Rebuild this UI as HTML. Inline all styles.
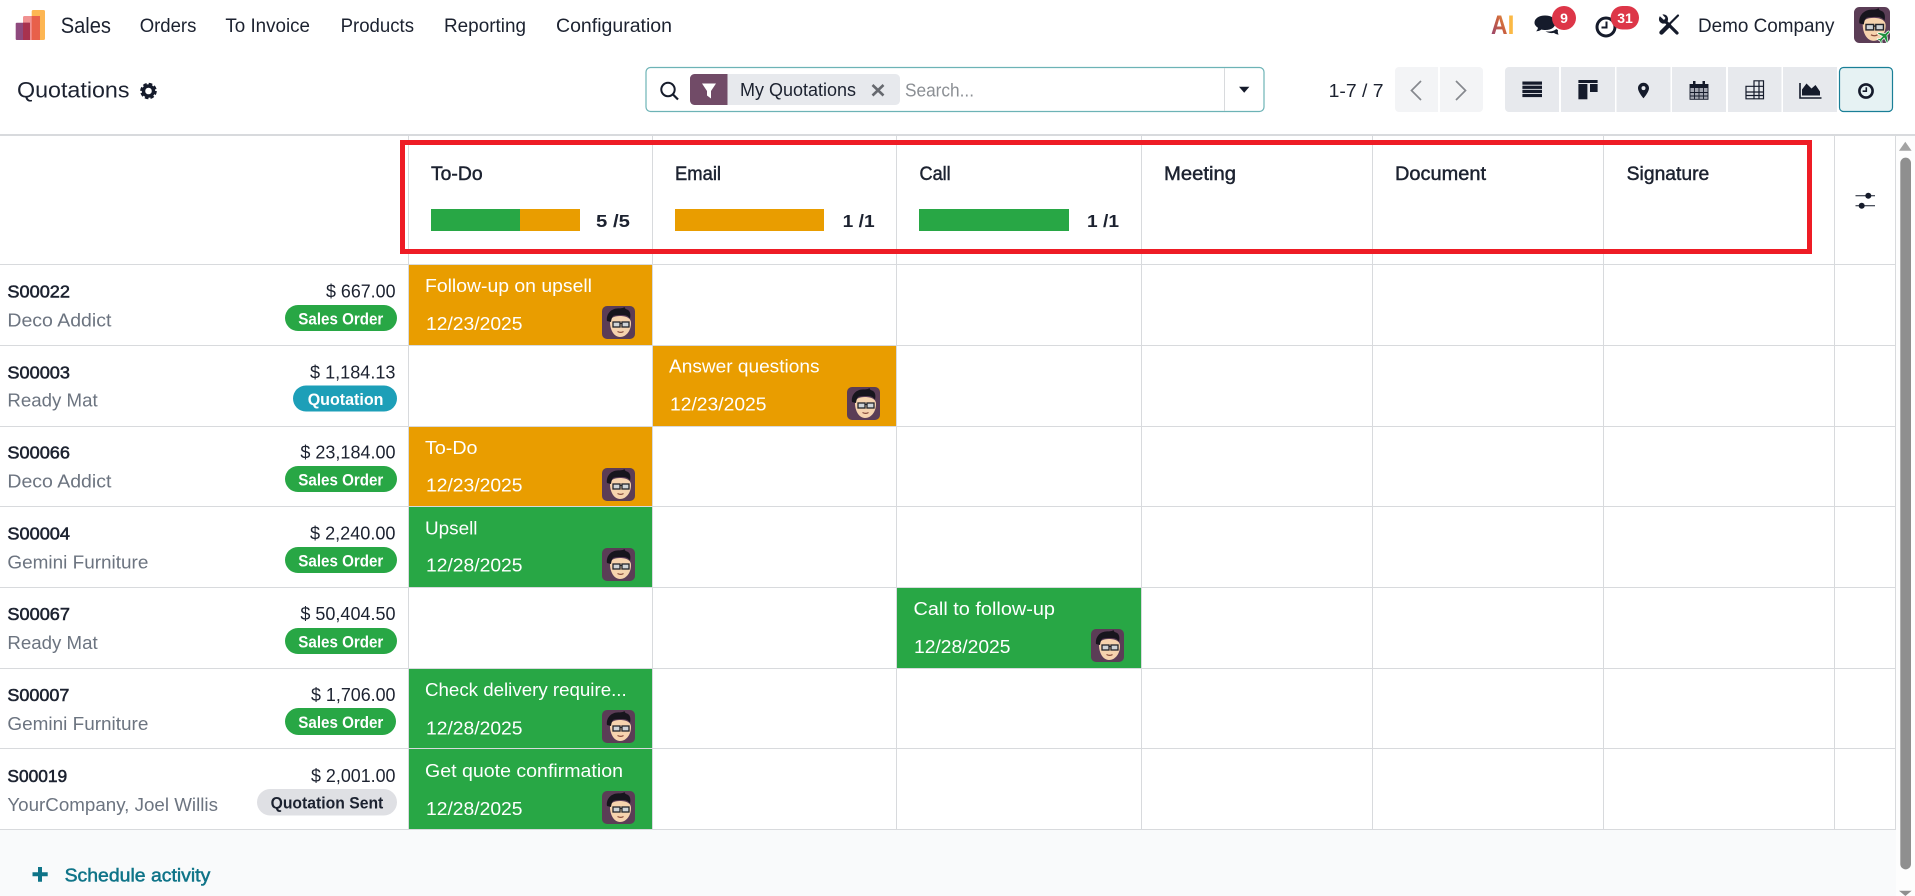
<!DOCTYPE html>
<html lang="en">
<head>
<meta charset="utf-8">
<title>Quotations</title>
<style>
html,body{margin:0;padding:0;width:1915px;height:896px;overflow:hidden;background:#fff}
svg{display:block}
text{font-family:"Liberation Sans",sans-serif;fill:#1c2230;font-size:18px}
.n{font-size:19px}
.h{font-size:19px;stroke:#1c2230;stroke-width:.45}
.b{font-size:17.500px;stroke:#1c2230;stroke-width:.55}
.p{font-size:18.500px;fill:#6c7480}
.a{font-size:18.500px}
.t{font-size:18.500px;fill:#fff}
.d{font-size:18.500px;fill:#fff}
.s{font-size:16.500px;font-weight:bold;fill:#fff}
.c{font-size:17.500px;font-weight:bold}
.l{stroke:#d8dadd;stroke-width:1}
.i{fill:#151b2b}
</style>
</head>
<body>
<svg xmlns="http://www.w3.org/2000/svg" width="1915" height="896" viewBox="0 0 1915 896">
<defs>
<linearGradient id="ag" x1="0" y1="1" x2="1" y2="0"><stop offset="0" stop-color="#8d3f78"/><stop offset=".55" stop-color="#c9603f"/><stop offset="1" stop-color="#fbb945"/></linearGradient>
<symbol id="av" viewBox="0 0 33 33">
<rect width="33" height="33" rx="5" fill="#5b3d56"/>
<path d="M8 16c0-4 4-6 10-6s11 2 11 7c0 8-5 14-11 14s-10-7-10-15z" fill="#f6d3ae"/>
<path d="M5 15c-1-6 3-12 10-12.500 3-.3 5 .3 7.500-1.500.3 1.500 1 2 2.500 2.500 3 1 4 4.500 3 9-1.500-2-3-3-5.500-3.300-4-.4-8 0-11 .6-1.500 1.500-2 3-2.500 6.200z" fill="#17151d"/>
<rect x="11" y="16" width="7" height="5" fill="#cfd3d6" stroke="#22242b" stroke-width="1.300"/>
<rect x="20" y="16" width="7" height="5" fill="#cfd3d6" stroke="#22242b" stroke-width="1.300"/>
<path d="M18 17.500h2" stroke="#22242b" stroke-width="1.200"/>
<path d="M15.500 25.500c2 1 4.500 1 6 0" stroke="#8a4d3c" stroke-width="1.200" fill="none"/>
</symbol>
</defs>

<!-- backgrounds -->
<rect x="0" y="830" width="1896" height="66" fill="#f9fafb"/>
<rect x="1896" y="136" width="19" height="760" fill="#fdfdfd"/>
<rect x="0" y="134" width="1915" height="2" fill="#d8dadd"/>

<!-- navbar -->
<rect x="31.700" y="10" width="13.300" height="30" rx="1.500" fill="#fdb653"/>
<rect x="23" y="16" width="17" height="24" rx="1.500" fill="#f09292"/>
<rect x="31.700" y="16" width="8.300" height="24" fill="#e8604a"/>
<rect x="15.700" y="22.700" width="14.300" height="17.300" rx="1" fill="#8f4a7e"/>
<rect x="23" y="22.700" width="7" height="17.300" fill="#a8324f"/>
<text x="60.700" y="33" style="font-size:22px" textLength="50.300" lengthAdjust="spacingAndGlyphs">Sales</text>
<text class="n" x="139.700" y="32" textLength="56.700" lengthAdjust="spacingAndGlyphs">Orders</text>
<text class="n" x="225.400" y="32" textLength="84.600" lengthAdjust="spacingAndGlyphs">To Invoice</text>
<text class="n" x="340.600" y="32" textLength="73.400" lengthAdjust="spacingAndGlyphs">Products</text>
<text class="n" x="444" y="32" textLength="82" lengthAdjust="spacingAndGlyphs">Reporting</text>
<text class="n" x="556" y="32" textLength="116" lengthAdjust="spacingAndGlyphs">Configuration</text>

<text x="1491" y="34" style="font-size:27px;font-weight:bold;fill:url(#ag)" textLength="16.500" lengthAdjust="spacingAndGlyphs">A</text>
<text x="1507.500" y="34" style="font-size:27px;font-weight:bold;fill:#fbb945" textLength="7" lengthAdjust="spacingAndGlyphs">I</text>

<path class="i" d="M1545 15.500c6.500 0 10.500 3 10.500 7.200s-4 7.300-10 7.300c-1.500 0-3-.2-4-.5-1.500 1.200-3.500 1.800-5.500 1.800 1-.9 1.800-2.200 2-3.600-2-1.200-3.500-3-3.500-5 0-4.200 4.500-7.200 10.500-7.200z"/>
<path class="i" d="M1545.500 31.200c1.200.3 2.800.4 4 .3 2.800-.1 5.300-1 6.800-2.500.8.700 1.700 1 1.700 1-.3 1.300-.4 2.800.6 4.600-2-.1-3.600-.8-4.600-1.700-2.800.5-6 0-8.500-1.700z"/>
<circle cx="1564" cy="18" r="12" fill="#dd3648"/>
<text x="1564" y="23" text-anchor="middle" style="font-size:14px;font-weight:bold;fill:#fff">9</text>

<circle cx="1606" cy="27" r="9" fill="none" stroke="#151b2b" stroke-width="3"/>
<path d="M1606.500 21.500v6h-5" fill="none" stroke="#151b2b" stroke-width="2"/>
<rect x="1610.700" y="6" width="28.300" height="23.500" rx="11.700" fill="#dd3648"/>
<text x="1625" y="23" text-anchor="middle" style="font-size:14px;font-weight:bold;fill:#fff">31</text>

<!-- tools -->
<path d="M1665 21l12 12" stroke="#151b2b" stroke-width="3.200" stroke-linecap="round"/>
<circle cx="1663.500" cy="19" r="4.600" class="i"/>
<path d="M1658 14.500l6 5.500 1.500-2-4.500-5z" fill="#fff"/>
<path d="M1678 15.500l-8 8" stroke="#151b2b" stroke-width="2.200" stroke-linecap="round"/>
<path d="M1669 25l-7.500 7.500" stroke="#151b2b" stroke-width="4.400" stroke-linecap="round"/>

<text class="n" x="1698" y="32" textLength="136.500" lengthAdjust="spacingAndGlyphs">Demo Company</text>
<use href="#av" x="1854" y="7" width="36" height="36"/>
<g transform="translate(1884.500 36) rotate(45) scale(.85)"><path d="M0-8c1 0 1.500 1 1.500 2.500v3L8 2v2l-6.500-2v4l2 1.500v1.500L0 8l-3.500 1v-1.500l2-1.500v-4L-8 4V2l6.500-4.500v-3C-1.500-7-1-8 0-8z" fill="#1f8f3d" stroke="#fff" stroke-width=".8"/></g>

<!-- control panel -->
<text x="17" y="97.700" style="font-size:22px" textLength="112.500" lengthAdjust="spacingAndGlyphs">Quotations</text>
<circle cx="148.500" cy="91" r="5" fill="none" stroke="#151b2b" stroke-width="3.400"/>
<circle cx="148.500" cy="91" r="7" fill="none" stroke="#151b2b" stroke-width="2.600" stroke-dasharray="3.500 2"/>

<rect x="646" y="67.500" width="618" height="44" rx="4.500" fill="#fff" stroke="#6db3b6" stroke-width="1.200"/>
<path d="M1224.500 68v43" stroke="#d8dadd"/>
<circle cx="668" cy="89.500" r="6.700" fill="none" stroke="#151b2b" stroke-width="2"/>
<path d="M673 94.500l5 5" stroke="#151b2b" stroke-width="2.200"/>
<rect x="690" y="74" width="210" height="31" rx="4.500" fill="#e7e9ed"/>
<path d="M694.500 74h33v31h-33a4.500 4.500 0 0 1-4.500-4.500v-22a4.500 4.500 0 0 1 4.500-4.500z" fill="#714b67"/>
<path d="M702 83.500h14l-5 7.500v7.500l-4-3v-4.500z" fill="#fff"/>
<text class="a" x="740" y="96" textLength="116" lengthAdjust="spacingAndGlyphs">My Quotations</text>
<path d="M872.500 85l11 10.500m0-10.500l-11 10.500" stroke="#66696f" stroke-width="2.600"/>
<text class="a" x="905" y="96.700" style="fill:#8b8f94" textLength="69" lengthAdjust="spacingAndGlyphs">Search...</text>
<path d="M1239 86.700h10.400l-5.200 6z" class="i"/>

<text class="a" x="1328.600" y="97" textLength="55" lengthAdjust="spacingAndGlyphs">1-7 / 7</text>
<path d="M1399 67h39v45h-39a4 4 0 0 1-4-4v-37a4 4 0 0 1 4-4z" fill="#f3f4f6"/>
<path d="M1440 67h39a4 4 0 0 1 4 4v37a4 4 0 0 1-4 4h-39z" fill="#f3f4f6"/>
<path d="M1421 81l-9.500 9.500 9.500 9.500" fill="none" stroke="#85888e" stroke-width="1.700"/>
<path d="M1456 81l9.500 9.500-9.500 9.500" fill="none" stroke="#85888e" stroke-width="1.700"/>

<path d="M1509 67h50v45h-50a4 4 0 0 1-4-4v-37a4 4 0 0 1 4-4z" fill="#e7e9ed"/>
<rect x="1561" y="67" width="54" height="45" fill="#e7e9ed"/>
<rect x="1616.500" y="67" width="54" height="45" fill="#e7e9ed"/>
<rect x="1672" y="67" width="54" height="45" fill="#e7e9ed"/>
<rect x="1728" y="67" width="53.500" height="45" fill="#e7e9ed"/>
<rect x="1783" y="67" width="54" height="45" fill="#e7e9ed"/>
<rect x="1839.500" y="67.500" width="53" height="44" rx="4" fill="#e6f2f3" stroke="#1a7f97" stroke-width="1.200"/>

<g class="i">
<rect x="1522.400" y="81.500" width="19.600" height="3.200"/><rect x="1522.400" y="85.700" width="19.600" height="3.200"/><rect x="1522.400" y="89.800" width="19.600" height="3.200"/><rect x="1522.400" y="93.900" width="19.600" height="3.200"/>
<rect x="1578.400" y="80" width="19.200" height="3"/><rect x="1578.400" y="84" width="9" height="15.300"/><rect x="1590" y="84" width="7.600" height="8"/>
<path fill-rule="evenodd" d="M1643.500 82.700c3 0 5.500 2.400 5.500 5.400 0 4-5.500 10.200-5.500 10.200s-5.500-6.200-5.500-10.200c0-3 2.500-5.400 5.500-5.400zm0 3.400a2 2 0 1 0 0 4 2 2 0 0 0 0-4z"/>
<path d="M1690 84h18v15.300h-18z" fill="#a4a7b2"/>
<path d="M1690 84h18v4h-18z"/><rect x="1693" y="81" width="2.500" height="4"/><rect x="1702.500" y="81" width="2.500" height="4"/>
<path d="M1690 84v15.300h18v-15.300M1690 92.500h18M1690 96h18M1694.500 88v11M1699 88v11M1703.500 88v11" fill="none" stroke="#151b2b" stroke-width=".9"/>
</g>
<path d="M1754 80.800h9.500v18h-17.500v-12.500h8zM1746 92h17.500M1746 95.500h17.500M1754 86.300v12.500M1759 80.800v18M1754 86.300h9.500" fill="none" stroke="#151b2b" stroke-width="1.200"/>
<path d="M1800 83v15h21.500" fill="none" stroke="#151b2b" stroke-width="1.600"/>
<path class="i" d="M1802 95.500v-6l4.500-6 5 5 4-3.500 4.500 6.500v4z"/>
<circle cx="1866" cy="91" r="6.600" fill="none" stroke="#151b2b" stroke-width="2.600"/>
<path d="M1866.300 87.200v4h-3.700" fill="none" stroke="#151b2b" stroke-width="1.600"/>

<!-- cell fills -->
<g>
<rect x="409" y="265" width="243" height="80" fill="#e99d00"/>
<rect x="653" y="346" width="243" height="80" fill="#e99d00"/>
<rect x="409" y="427" width="243" height="79" fill="#e99d00"/>
<rect x="409" y="507" width="243" height="80" fill="#28a745"/>
<rect x="897" y="588" width="244" height="80" fill="#28a745"/>
<rect x="409" y="669" width="243" height="79" fill="#28a745"/>
<rect x="409" y="749" width="243" height="80" fill="#28a745"/>
</g>

<!-- grid lines -->
<g class="l">
<path d="M0 264.500H1896M0 345.500H1896M0 426.500H1896M0 506.500H1896M0 587.500H1896M0 668.500H1896M0 748.500H1896M0 829.500H1896"/>
<path d="M408.500 136V830M652.500 136V830M896.500 136V830M1141.500 136V830M1372.500 136V830M1603.500 136V830M1834.500 136V830M1895.500 136V830"/>
</g>

<!-- header -->
<text class="h" x="431" y="180" textLength="51.600" lengthAdjust="spacingAndGlyphs">To-Do</text>
<text class="h" x="675" y="180" textLength="46" lengthAdjust="spacingAndGlyphs">Email</text>
<text class="h" x="919.500" y="180" textLength="31.200" lengthAdjust="spacingAndGlyphs">Call</text>
<text class="h" x="1164" y="180" textLength="72" lengthAdjust="spacingAndGlyphs">Meeting</text>
<text class="h" x="1395" y="180" textLength="91" lengthAdjust="spacingAndGlyphs">Document</text>
<text class="h" x="1626.700" y="180" textLength="82.600" lengthAdjust="spacingAndGlyphs">Signature</text>

<rect x="431" y="209" width="89" height="22" fill="#28a745"/>
<rect x="520" y="209" width="60" height="22" fill="#e99d00"/>
<text class="c" x="596" y="227" textLength="34" lengthAdjust="spacingAndGlyphs">5 /5</text>
<rect x="675" y="209" width="149" height="22" fill="#e99d00"/>
<text class="c" x="842.700" y="227" textLength="32" lengthAdjust="spacingAndGlyphs">1 /1</text>
<rect x="919" y="209" width="150" height="22" fill="#28a745"/>
<text class="c" x="1087" y="227" textLength="32" lengthAdjust="spacingAndGlyphs">1 /1</text>

<path d="M1855.500 195.700h19.500M1855.500 205.700h19.500" stroke="#151b2b" stroke-width="1"/>
<circle cx="1868.300" cy="195.700" r="3" class="i"/>
<circle cx="1861.700" cy="205.700" r="3" class="i"/>

<!-- row 1 -->
<text class="b" x="7.400" y="297.500" textLength="62.600" lengthAdjust="spacingAndGlyphs">S00022</text>
<text class="a" x="326" y="297.500" textLength="69.500" lengthAdjust="spacingAndGlyphs">$ 667.00</text>
<text class="p" x="7.400" y="326.500" textLength="104" lengthAdjust="spacingAndGlyphs">Deco Addict</text>
<rect x="285" y="305" width="112" height="26" rx="13" fill="#28a745"/>
<text class="s" x="298.300" y="324.500" textLength="85" lengthAdjust="spacingAndGlyphs">Sales Order</text>
<text class="t" x="425" y="292" textLength="167" lengthAdjust="spacingAndGlyphs">Follow-up on upsell</text>
<text class="d" x="426" y="330" textLength="96.500" lengthAdjust="spacingAndGlyphs">12/23/2025</text>
<use href="#av" x="602" y="306" width="33" height="33"/>

<!-- row 2 -->
<text class="b" x="7.400" y="378.500" textLength="62.600" lengthAdjust="spacingAndGlyphs">S00003</text>
<text class="a" x="310" y="378.500" textLength="85.500" lengthAdjust="spacingAndGlyphs">$ 1,184.13</text>
<text class="p" x="7.400" y="406.500" textLength="90.300" lengthAdjust="spacingAndGlyphs">Ready Mat</text>
<rect x="293" y="385.500" width="104" height="26" rx="13" fill="#1d9fb8"/>
<text class="s" x="307.700" y="405" textLength="75.800" lengthAdjust="spacingAndGlyphs">Quotation</text>
<text class="t" x="669" y="372.500" textLength="150.500" lengthAdjust="spacingAndGlyphs">Answer questions</text>
<text class="d" x="670" y="410.500" textLength="96.500" lengthAdjust="spacingAndGlyphs">12/23/2025</text>
<use href="#av" x="847" y="387" width="33" height="33"/>

<!-- row 3 -->
<text class="b" x="7.400" y="458.500" textLength="62.600" lengthAdjust="spacingAndGlyphs">S00066</text>
<text class="a" x="300.400" y="458.500" textLength="95.100" lengthAdjust="spacingAndGlyphs">$ 23,184.00</text>
<text class="p" x="7.400" y="487.500" textLength="104" lengthAdjust="spacingAndGlyphs">Deco Addict</text>
<rect x="285" y="466" width="112" height="26" rx="13" fill="#28a745"/>
<text class="s" x="298.300" y="485.500" textLength="85" lengthAdjust="spacingAndGlyphs">Sales Order</text>
<text class="t" x="425" y="454" textLength="52.500" lengthAdjust="spacingAndGlyphs">To-Do</text>
<text class="d" x="426" y="491.500" textLength="96.500" lengthAdjust="spacingAndGlyphs">12/23/2025</text>
<use href="#av" x="602" y="468" width="33" height="33"/>

<!-- row 4 -->
<text class="b" x="7.400" y="539.500" textLength="62.600" lengthAdjust="spacingAndGlyphs">S00004</text>
<text class="a" x="310" y="539.500" textLength="85.500" lengthAdjust="spacingAndGlyphs">$ 2,240.00</text>
<text class="p" x="7.400" y="568.500" textLength="141" lengthAdjust="spacingAndGlyphs">Gemini Furniture</text>
<rect x="285" y="547" width="112" height="26" rx="13" fill="#28a745"/>
<text class="s" x="298.300" y="566.500" textLength="85" lengthAdjust="spacingAndGlyphs">Sales Order</text>
<text class="t" x="425" y="534.500" textLength="52.500" lengthAdjust="spacingAndGlyphs">Upsell</text>
<text class="d" x="426" y="571.500" textLength="96.500" lengthAdjust="spacingAndGlyphs">12/28/2025</text>
<use href="#av" x="602" y="548" width="33" height="33"/>

<!-- row 5 -->
<text class="b" x="7.400" y="620" textLength="62.600" lengthAdjust="spacingAndGlyphs">S00067</text>
<text class="a" x="300.400" y="620" textLength="95.100" lengthAdjust="spacingAndGlyphs">$ 50,404.50</text>
<text class="p" x="7.400" y="649" textLength="90.300" lengthAdjust="spacingAndGlyphs">Ready Mat</text>
<rect x="285" y="628" width="112" height="26" rx="13" fill="#28a745"/>
<text class="s" x="298.300" y="647.500" textLength="85" lengthAdjust="spacingAndGlyphs">Sales Order</text>
<text class="t" x="913.500" y="615" textLength="141.500" lengthAdjust="spacingAndGlyphs">Call to follow-up</text>
<text class="d" x="914" y="653" textLength="96.500" lengthAdjust="spacingAndGlyphs">12/28/2025</text>
<use href="#av" x="1091" y="629" width="33" height="33"/>

<!-- row 6 -->
<text class="b" x="7.400" y="701" textLength="62" lengthAdjust="spacingAndGlyphs">S00007</text>
<text class="a" x="311" y="701" textLength="84.500" lengthAdjust="spacingAndGlyphs">$ 1,706.00</text>
<text class="p" x="7.400" y="730" textLength="141" lengthAdjust="spacingAndGlyphs">Gemini Furniture</text>
<rect x="285" y="708" width="111" height="27" rx="13.500" fill="#28a745"/>
<text class="s" x="298.300" y="728" textLength="85" lengthAdjust="spacingAndGlyphs">Sales Order</text>
<text class="t" x="425" y="696" textLength="201.700" lengthAdjust="spacingAndGlyphs">Check delivery require...</text>
<text class="d" x="426" y="734.500" textLength="96.500" lengthAdjust="spacingAndGlyphs">12/28/2025</text>
<use href="#av" x="602" y="710" width="33" height="33"/>

<!-- row 7 -->
<text class="b" x="7.400" y="782" textLength="59.800" lengthAdjust="spacingAndGlyphs">S00019</text>
<text class="a" x="311" y="782" textLength="84.500" lengthAdjust="spacingAndGlyphs">$ 2,001.00</text>
<text class="p" x="7.400" y="811" textLength="210.600" lengthAdjust="spacingAndGlyphs">YourCompany, Joel Willis</text>
<rect x="257" y="789" width="140" height="26.500" rx="13.250" fill="#dfe0e4"/>
<text class="s" x="270.600" y="808.500" style="fill:#1c2230" textLength="112.700" lengthAdjust="spacingAndGlyphs">Quotation Sent</text>
<text class="t" x="425" y="777" textLength="198" lengthAdjust="spacingAndGlyphs">Get quote confirmation</text>
<text class="d" x="426" y="815" textLength="96.500" lengthAdjust="spacingAndGlyphs">12/28/2025</text>
<use href="#av" x="602" y="791" width="33" height="33"/>

<!-- schedule activity -->
<path d="M40 867v14.700M32.500 874.300h15.200" stroke="#0f7488" stroke-width="4"/>
<text x="64.600" y="881.700" style="font-size:18.500px;fill:#0f7488;stroke:#0f7488;stroke-width:.5" textLength="145.700" lengthAdjust="spacingAndGlyphs">Schedule activity</text>

<!-- red highlight -->
<rect x="402.500" y="142.500" width="1407" height="109" fill="none" stroke="#ee1c25" stroke-width="5"/>

<!-- scrollbar -->
<path d="M1899 150.700l6.300-9 6.300 9z" fill="#a3a3a3"/>
<path d="M1900.300 163a5.300 5.300 0 0 1 10.700 0V864a5.300 5.300 0 0 1-10.700 0z" fill="#8f8f8f"/>
<path d="M1899 890.700h12.700l-6.300 5.300z" fill="#8f8f8f"/>
</svg>
</body>
</html>
